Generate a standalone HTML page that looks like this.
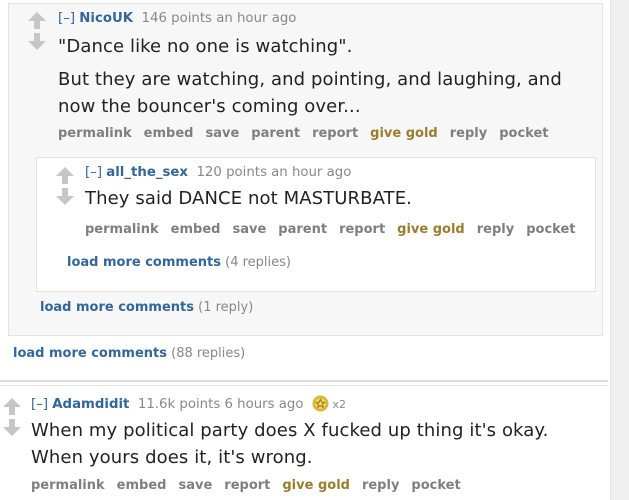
<!DOCTYPE html>
<html><head><meta charset="utf-8"><style>
*{margin:0;padding:0;box-sizing:border-box}
body{width:629px;height:500px;position:relative;overflow:hidden;background:#fff;font-family:"DejaVu Sans","Liberation Sans",sans-serif;color:#222}
.a{position:absolute;white-space:nowrap}
.tag{font-size:13.3px;color:#888}
.tag b{color:#369}
.tag .m{color:#369}
.body{font-size:18px;color:#222;letter-spacing:0.1px}
.btn{font-size:13px;font-weight:bold;color:#7f7f7f}
.btn span{margin-right:12px}
.btn .g{color:#9a7d2e}
.lm{font-size:13px;color:#888}
.lm b{color:#369}
</style></head><body>
<div class="a" style="left:610px;top:0;width:19px;height:500px;background:#efefef;border-left:1px solid #e4e4e4"></div>
<div class="a" style="left:8px;top:3px;width:595px;height:333px;background:#f7f7f7;border:1px solid #e2e2e2"></div>
<div class="a" style="left:36px;top:157px;width:560px;height:135px;background:#fff;border:1px solid #e2e2e2"></div>

<svg class="a" style="left:27px;top:12px" width="20" height="38" viewBox="0 0 20 38"><path d="M10 0 L19 9 L13 9 L13 17 L7 17 L7 9 L1 9Z M7 21 L13 21 L13 29 L19 29 L10 38 L1 29 L7 29Z" fill="#c6c6c6"/></svg>
<div class="a tag" style="left:58px;top:11px"><span class="m">[–]</span> <b>NicoUK</b>&nbsp; 146 points an hour ago</div>
<div class="a body" style="left:58px;top:36px">"Dance like no one is watching".</div>
<div class="a body" style="left:58px;top:66px;line-height:27px">But they are watching, and pointing, and laughing, and<br>now the bouncer's coming over...</div>
<div class="a btn" style="left:58px;top:126px"><span>permalink</span><span>embed</span><span>save</span><span>parent</span><span>report</span><span class="g">give gold</span><span>reply</span><span>pocket</span></div>

<svg class="a" style="left:55px;top:167px" width="20" height="38" viewBox="0 0 20 38"><path d="M10 0 L19 9 L13 9 L13 17 L7 17 L7 9 L1 9Z M7 21 L13 21 L13 29 L19 29 L10 38 L1 29 L7 29Z" fill="#c6c6c6"/></svg>
<div class="a tag" style="left:85px;top:165px"><span class="m">[–]</span> <b>all_the_sex</b>&nbsp; 120 points an hour ago</div>
<div class="a body" style="left:85px;top:188px">They said DANCE not MASTURBATE.</div>
<div class="a btn" style="left:85px;top:222px"><span>permalink</span><span>embed</span><span>save</span><span>parent</span><span>report</span><span class="g">give gold</span><span>reply</span><span>pocket</span></div>
<div class="a lm" style="left:67px;top:255px"><b>load more comments</b> (4 replies)</div>
<div class="a lm" style="left:40px;top:300px"><b>load more comments</b> (1 reply)</div>
<div class="a lm" style="left:13px;top:346px"><b>load more comments</b> (88 replies)</div>

<div class="a" style="left:0;top:380px;width:608px;height:2px;background:#dcdcdc"></div>
<div class="a" style="left:0;top:385px;width:608px;height:1px;background:#e4e4e4"></div>

<svg class="a" style="left:2px;top:398px" width="20" height="38" viewBox="0 0 20 38"><path d="M10 0 L19 9 L13 9 L13 17 L7 17 L7 9 L1 9Z M7 21 L13 21 L13 29 L19 29 L10 38 L1 29 L7 29Z" fill="#c6c6c6"/></svg>
<div class="a tag" style="left:31px;top:395px"><span class="m">[–]</span> <b>Adamdidit</b>&nbsp; 11.6k points 6 hours ago&nbsp;
<svg width="17" height="17" viewBox="0 0 16 16" style="vertical-align:-4px"><circle cx="8" cy="8" r="7.5" fill="#d8b53c"/><circle cx="8" cy="8" r="5" fill="#f1d86a"/><path d="M8 4 L9.2 6.8 L12 7 L9.8 8.8 L10.5 11.5 L8 10 L5.5 11.5 L6.2 8.8 L4 7 L6.8 6.8Z" fill="none" stroke="#a07d10" stroke-width="1"/></svg><span style="font-size:11px;color:#888"> x2</span></div>
<div class="a body" style="left:31px;top:417px;line-height:27px">When my political party does X fucked up thing it's okay.<br>When yours does it, it's wrong.</div>
<div class="a btn" style="left:31px;top:478px"><span>permalink</span><span>embed</span><span>save</span><span>report</span><span class="g">give gold</span><span>reply</span><span>pocket</span></div>
</body></html>
